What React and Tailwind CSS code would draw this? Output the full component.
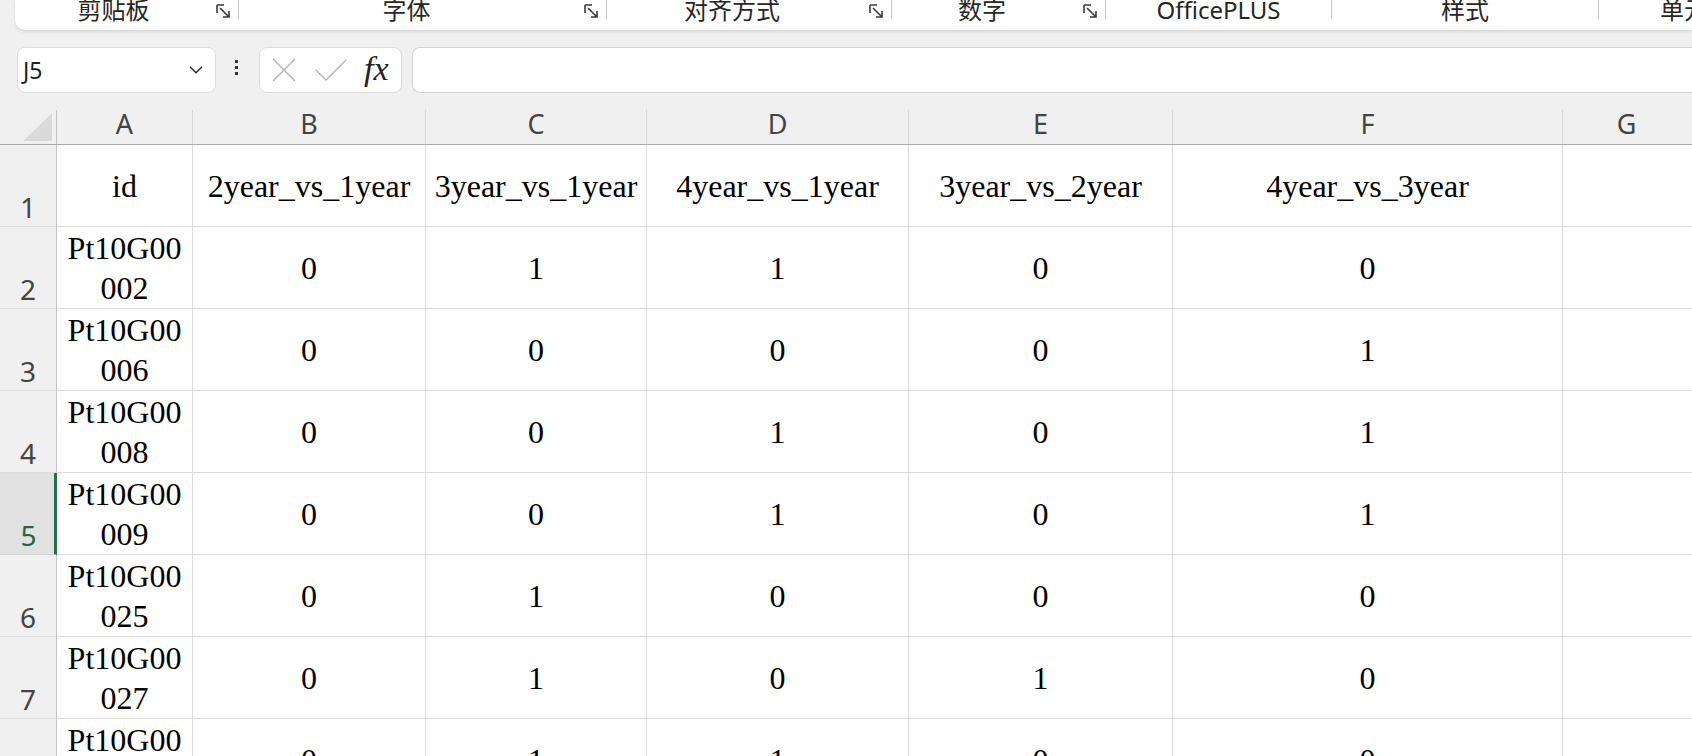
import { ChevronDown } from 'lucide-react';

const COLS = [
    { key: 'A', w: 'w-[136px]' },
    { key: 'B', w: 'w-[233px]' },
    { key: 'C', w: 'w-[221px]' },
    { key: 'D', w: 'w-[262px]' },
    { key: 'E', w: 'w-[264px]' },
    { key: 'F', w: 'w-[390px]' },
];

const ROWS = [
    { n: 1, id: ['id'], v: ['2year_vs_1year', '3year_vs_1year', '4year_vs_1year', '3year_vs_2year', '4year_vs_3year'] },
    { n: 2, id: ['Pt10G00', '002'], v: ['0', '1', '1', '0', '0'] },
    { n: 3, id: ['Pt10G00', '006'], v: ['0', '0', '0', '0', '1'] },
    { n: 4, id: ['Pt10G00', '008'], v: ['0', '0', '1', '0', '1'] },
    { n: 5, id: ['Pt10G00', '009'], v: ['0', '0', '1', '0', '1'], active: true },
    { n: 6, id: ['Pt10G00', '025'], v: ['0', '1', '0', '0', '0'] },
    { n: 7, id: ['Pt10G00', '027'], v: ['0', '1', '0', '1', '0'] },
    { n: 8, id: ['Pt10G00', '028'], v: ['0', '1', '1', '0', '0'] },
];

function Launcher() {
    return (
        <svg width="17" height="17" viewBox="0 0 17 17" fill="none" stroke="#3a3a3a" strokeWidth="1.6" className="mt-[3px]">
            <path d="M2 2 H9 M2 2 V10" />
            <path d="M5 5 L14 14 M14 8 V14 H8" />
        </svg>
    );
}

function Group({ width, labelW, label, launcher }) {
    return (
        <>
            <div className={`flex items-start h-full shrink-0 ${width}`}>
                <div className={`${labelW} shrink-0 text-center text-[24px] leading-[24px] -mt-[2px] text-[#262626] whitespace-nowrap`}>{label}</div>
                {launcher && <div className="ml-auto mr-[6px]"><Launcher /></div>}
            </div>
            <div className="w-px h-[19px] bg-[#c9c9c9] shrink-0" />
        </>
    );
}

export default function App() {
    return (
        <div className="w-[1692px] h-[756px] overflow-hidden bg-[#f0f0f0] font-['Noto_Sans','Noto_Sans_CJK_SC',sans-serif]">
            {/* ribbon group labels */}
            <div className="h-[33px] pl-[15px] flex">
                <div className="flex-1 h-[30px] bg-white rounded-bl-[10px] shadow-[0_2px_3px_rgba(0,0,0,0.10)] flex overflow-hidden">
                    <Group width="w-[223px]" labelW="w-[197px]" label="剪贴板" launcher />
                    <Group width="w-[367px]" labelW="w-[335px]" label="字体" launcher />
                    <Group width="w-[284px]" labelW="w-[250px]" label="对齐方式" launcher />
                    <Group width="w-[213px]" labelW="w-[180px]" label="数字" launcher />
                    <Group width="w-[225px]" labelW="w-[225px]" label="OfficePLUS" />
                    <Group width="w-[266px]" labelW="w-[266px]" label="样式" />
                    <div className="shrink-0 pl-[61px] text-[24px] leading-[24px] -mt-[2px] text-[#262626] whitespace-nowrap">单元格</div>
                </div>
            </div>

            {/* formula bar */}
            <div className="mt-[14px] h-[46px] flex">
                <div className="ml-[17px] w-[199px] h-full bg-white border border-[#dcdcdc] rounded-[8px] flex items-center pl-[5px] pr-[8px]">
                    <span className="text-[23px] text-[#222]">J5</span>
                    <ChevronDown className="ml-auto text-[#333]" size={22} strokeWidth={1.8} />
                </div>
                <div className="w-[43px] flex flex-col items-center justify-center gap-[3px] pb-[6px] pr-[2px]">
                    <div className="w-[3px] h-[3px] bg-[#333]" />
                    <div className="w-[3px] h-[3px] bg-[#333]" />
                    <div className="w-[3px] h-[3px] bg-[#333]" />
                </div>
                <div className="w-[143px] h-full bg-white border border-[#dcdcdc] rounded-[8px] flex items-center pl-[12px] gap-[19px]">
                    <svg width="24" height="24" viewBox="0 0 24 24" fill="none" stroke="#b3b3b3" strokeWidth="1.4">
                        <path d="M1 1 L23 23 M23 1 L1 23" />
                    </svg>
                    <svg width="32" height="22" viewBox="0 0 32 22" fill="none" stroke="#b3b3b3" strokeWidth="1.4">
                        <path d="M1 11 L11 21 L31 1" />
                    </svg>
                    <span className="font-['Liberation_Serif',serif] italic text-[34px] leading-none text-[#222] -ml-[2px] pb-[2px]">fx</span>
                </div>
                <div className="ml-[10px] flex-1 h-full bg-white border-y border-l border-[#d4d4d4] rounded-l-[8px]" />
            </div>

            {/* sheet */}
            <div className="mt-[17px] bg-white">
                {/* column header */}
                <div className="flex h-[35px] bg-[#f0f0f0] border-b border-[#ababab]">
                    <div className="w-[57px] shrink-0 border-r border-[#c4c4c4] flex items-end justify-end pr-[4px] pb-[3px]">
                        <svg width="29" height="28" viewBox="0 0 29 28">
                            <polygon points="29,0 29,28 0,28" fill="#dadada" />
                        </svg>
                    </div>
                    {COLS.map(c => (
                        <div key={c.key} className={`${c.w} shrink-0 border-r border-[#d6d6d6] flex items-center justify-center pb-[5px] text-[27px] text-[#444]`}>
                            {c.key}
                        </div>
                    ))}
                    <div className="flex-1 flex items-center justify-center pb-[5px] pr-[2px] text-[27px] text-[#444]">G</div>
                </div>

                {ROWS.map(r => (
                    <div key={r.n} className="flex h-[82px]">
                        <div className={`w-[57px] shrink-0 flex items-end justify-center pb-[5px] text-[28px] leading-[28px] border-b ${r.active ? 'bg-[#e1e1e1] text-[#1d6b40] border-r-[3px] border-r-[#217346] border-b-[#d0d0d0] pl-[3px]' : 'bg-[#f0f0f0] text-[#444] border-r border-r-[#c4c4c4] border-b-[#dedede]'}`}>
                            {r.n}
                        </div>
                        <div className="w-[136px] shrink-0 border-r border-b border-[#dcdcdc] flex flex-col items-center justify-center font-['Liberation_Serif',serif] text-[32px] leading-[40px] text-black">
                            {r.id.map((t, i) => <div key={i}>{t}</div>)}
                        </div>
                        {r.v.map((t, i) => (
                            <div key={i} className={`${COLS[i + 1].w} shrink-0 border-r border-b border-[#dcdcdc] flex items-center justify-center font-['Liberation_Serif',serif] text-[32px] leading-[40px] text-black whitespace-nowrap`}>
                                {t}
                            </div>
                        ))}
                        <div className="flex-1 border-b border-[#dcdcdc]" />
                    </div>
                ))}
            </div>
        </div>
    );
}
